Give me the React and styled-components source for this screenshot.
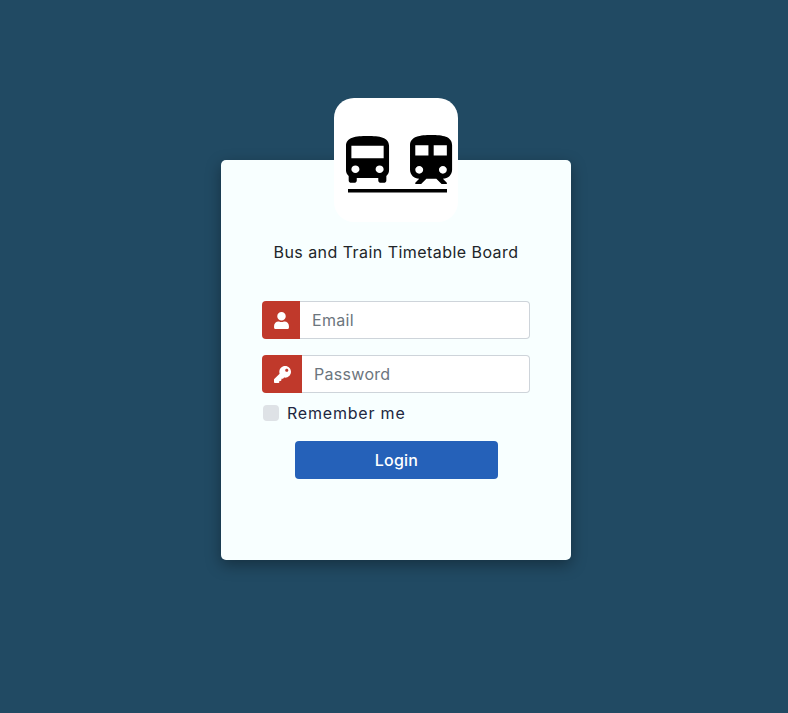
import React from "react";
import styled, { createGlobalStyle } from "styled-components";
import { FaUser, FaKey } from "react-icons/fa";

const GlobalStyle = createGlobalStyle`
  * { box-sizing: border-box; }
  body {
    margin: 0;
    background: #214a63;
    font-family: "Inter", "Open Sans", sans-serif;
  }
`;

const Page = styled.div`
  min-height: 713px;
  padding: 160px 0 0 4px;
  display: flex;
  justify-content: center;
  align-items: flex-start;
`;

const Card = styled.form`
  width: 350px;
  height: 400px;
  padding: 0 41px;
  background: #f8ffff;
  border-radius: 5px;
  box-shadow: 0 5px 15px rgba(0, 0, 0, 0.35);
  display: flex;
  flex-direction: column;
`;

const Logo = styled.div`
  width: 124px;
  height: 124px;
  margin: -62px auto 0;
  background: #fff;
  border-radius: 20px;
  flex-shrink: 0;

  svg { display: block; }
`;

const Title = styled.p`
  margin: 19px 0 0;
  height: 22px;
  line-height: 22px;
  text-align: center;
  font-size: 16px;
  color: #212529;
  letter-spacing: 0.45px;
  white-space: nowrap;
`;

const InputGroup = styled.div`
  display: flex;
  height: 38px;
  margin-top: ${(p) => p.$top}px;
`;

const IconBox = styled.span`
  width: ${(p) => p.$width}px;
  flex-shrink: 0;
  display: flex;
  align-items: center;
  justify-content: center;
  background: #c0392b;
  color: #fff;
  font-size: 17px;
  border-radius: 4px 0 0 4px;
`;

const Input = styled.input`
  flex: 1;
  min-width: 0;
  padding: 0 12px;
  background: #fff;
  border: 1px solid #ced4da;
  border-left: 0;
  border-radius: 0 4px 4px 0;
  font: inherit;
  font-size: 16px;
  letter-spacing: 0.3px;
  outline: none;

  &::placeholder {
    color: #6c757d;
    opacity: 1;
  }
`;

const Remember = styled.label`
  display: flex;
  align-items: center;
  gap: 8px;
  margin: 11px 0 0 1px;
  height: 17px;
  font-size: 16px;
  letter-spacing: 0.8px;
  color: #212741;
`;

const CheckBox = styled.span`
  width: 16px;
  height: 16px;
  border-radius: 4px;
  background: #dee2e6;
  flex-shrink: 0;
`;

const LoginButton = styled.button`
  width: 203px;
  height: 38px;
  margin: 20px 0 0 33px;
  background: #2561b9;
  color: #fff;
  border: 0;
  border-radius: 4px;
  font: inherit;
  font-size: 16px;
  font-weight: 500;
  letter-spacing: 0.2px;
`;

const BUS =
  "M4 16c0 .88.39 1.67 1 2.22V20c0 .55.45 1 1 1h1c.55 0 1-.45 1-1v-1h8v1c0 .55.45 1 1 1h1c.55 0 1-.45 1-1v-1.78c.61-.55 1-1.34 1-2.22V6c0-3.5-3.58-4-8-4s-8 .5-8 4v10zm3.5 1c-.83 0-1.5-.67-1.5-1.5S6.67 14 7.5 14s1.5.67 1.5 1.5S8.33 17 7.5 17zm9 0c-.83 0-1.5-.67-1.5-1.5s.67-1.5 1.5-1.5 1.5.67 1.5 1.5-.67 1.5-1.5 1.5zm1.5-6H6V6h12v5z";
const TRAIN =
  "M12 2c-4 0-8 .5-8 4v9.5C4 17.43 5.57 19 7.5 19L6 20.5v.5h2.23l2-2H14l2 2h2v-.5L16.5 19c1.93 0 3.5-1.57 3.5-3.5V6c0-3.5-3.58-4-8-4zM7.5 17c-.83 0-1.5-.67-1.5-1.5S6.67 14 7.5 14s1.5.67 1.5 1.5S8.33 17 7.5 17zm3.5-7H6V6h5v4zm2 0V6h5v4h-5zm3.5 7c-.83 0-1.5-.67-1.5-1.5s.67-1.5 1.5-1.5 1.5.67 1.5 1.5-.67 1.5-1.5 1.5z";

const LogoMark = () => (
  <svg width="124" height="124" viewBox="0 0 124 124">
    <path d={BUS} transform="translate(1.24 33) scale(2.69 2.47)" />
    <path d={TRAIN} transform="translate(65.5 31.8) scale(2.63 2.58)" />
    <rect x="14" y="91" width="99" height="3.5" />
  </svg>
);

const App = () => {
  return (
    <Page>
      <GlobalStyle />
      <Card>
        <Logo>
          <LogoMark />
        </Logo>
        <Title>Bus and Train Timetable Board</Title>
        <InputGroup $top={38}>
          <IconBox $width={38}>
            <FaUser />
          </IconBox>
          <Input type="email" placeholder="Email" />
        </InputGroup>
        <InputGroup $top={16}>
          <IconBox $width={40}>
            <FaKey />
          </IconBox>
          <Input type="password" placeholder="Password" />
        </InputGroup>
        <Remember>
          <CheckBox />
          Remember me
        </Remember>
        <LoginButton type="button">Login</LoginButton>
      </Card>
    </Page>
  );
};

export default App;
